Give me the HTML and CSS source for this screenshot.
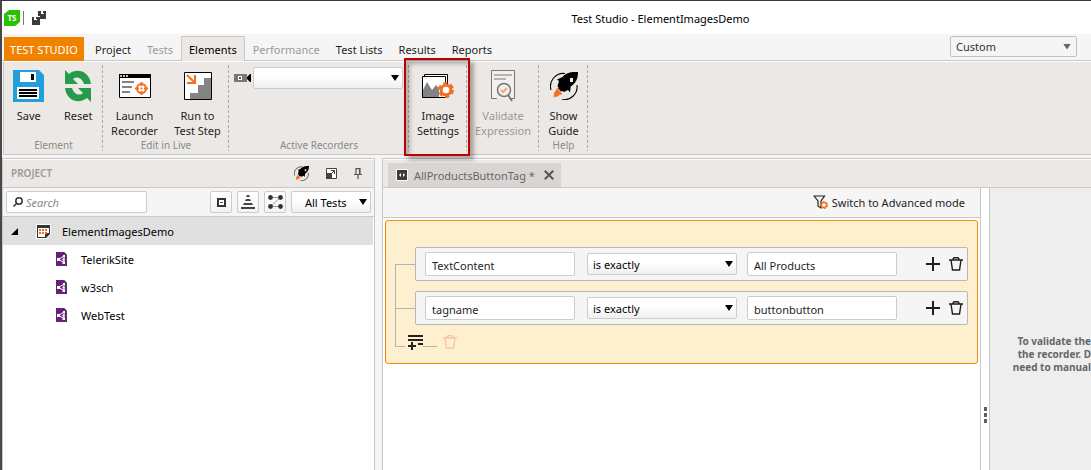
FILE: index.html
```html
<!DOCTYPE html>
<html lang="en">
<head>
<meta charset="utf-8">
<title>Test Studio - ElementImagesDemo</title>
<link rel="stylesheet" href="styles.css">
</head>
<body>
<svg class="defs" aria-hidden="true">
  <symbol id="trash" viewBox="0 0 14 14"><path d="M0 3h14M4 3V2l1-1.2h4L10 2v1M2 3l1.500 10h7L12 3" fill="none" stroke="currentColor" stroke-width="1.400"/></symbol>
  <symbol id="plus" viewBox="0 0 14 14"><path d="M7 0v14M0 7h14" stroke="currentColor" stroke-width="2"/></symbol>
  <symbol id="rocket" viewBox="0 0 28 28">
    <path d="M15 1.500A13 13 0 0 0 1 18M27 13a13 13 0 0 1-15 14.500" fill="none" stroke="#000" stroke-width="1.100"/>
    <path fill="#000" fill-rule="evenodd" d="M28 0c-8-.2-12 1-15.500 5L7 7.500 9 9l-1.500 5 1 1.500-.5 1 3 3 1.500-.5 1.500 1L18 18l2 2.500.7-6C26 11 28 7 28 0zM20 6h3v4h-3z"/>
    <path class="flame" d="M7 16l1 1.500 1 1 3 3-1 1.500-1.500-.5-1.500 2-4.500.5 1-5 1-.8z"/>
  </symbol>
  <symbol id="webtest" viewBox="0 0 11 14">
    <path d="M0 0h8l3 3v11H0z" fill="#68217a"/><path d="M8 0l3 3v11h-1V4H8z" fill="#444"/>
    <path d="M8 4L2.500 7.500 8 10.500z" fill="none" stroke="#fff"/><path d="M7 3h2v2H7zM1 6h3v3H1zM6.500 9.500H9V12H6.500zM6.500 6.500h2v2h-2z" fill="#fff"/>
  </symbol>
</svg>

<div class="app">
  <header class="titlebar">
    <div class="quick">
      <svg width="16" height="16" viewBox="0 0 16 16" role="img" aria-label="TS"><path d="M5 0h11v12l-5 4H0V4z" fill="#27c300"/><text x="8" y="11" text-anchor="middle" class="logo-text">TS</text></svg>
      <span class="quick-line"></span>
      <button class="icon-btn" aria-label="Save all"><svg width="15" height="14" viewBox="0 0 15 14"><path d="M6 0h8v8H8V5H6z" fill="#3c3c3c"/><path d="M0 6h8v8H0z" fill="#3c3c3c"/><path d="M9 0h3v3H9zM2 6h3v3H2z" fill="#fff"/><path d="M11 0h1v2h-1zM4 6h1v2H4z" fill="#3c3c3c"/></svg></button>
    </div>
    <h1 class="title">Test Studio - ElementImagesDemo</h1>
  </header>

  <nav class="tabs">
    <button class="tab brand">TEST STUDIO</button>
    <button class="tab">Project</button>
    <button class="tab" disabled>Tests</button>
    <button class="tab active">Elements</button>
    <button class="tab" disabled>Performance</button>
    <button class="tab">Test Lists</button>
    <button class="tab">Results</button>
    <button class="tab">Reports</button>
    <span class="picker layout-picker"><select aria-label="Layout"><option>Custom</option></select></span>
  </nav>

  <section class="ribbon">
    <div class="group g-element">
      <div class="tools">
        <button class="tool"><svg width="31" height="32" viewBox="0 0 31 32"><path d="M0 0h26l5 5v27H0z" fill="#259fdb"/><path d="M7 2h16v10H7zM4 17h22v12H4z" fill="#fff"/><path d="M18 4h3v6h-3zM6 19h18v2H6zM6 22h18v2H6zM6 25h18v2H6z" fill="#000"/></svg><span>Save</span></button>
        <button class="tool"><svg width="26" height="32" viewBox="0 0 26 32"><g fill="#259b4b"><path d="M0 0l4 4c7-6 20-4 22 10h-7C17 7 11 6 8 9l5 5H0z"/><path d="M26 32l-4-4c-7 6-20 4-22-10h7c2 7 8 8 11 5l-5-5h13z"/></g></svg><span>Reset</span></button>
      </div>
      <h2>Element</h2>
    </div>
    <div class="group g-live">
      <div class="tools">
        <button class="tool"><svg width="32" height="32" viewBox="0 0 32 32"><path d="M.5 4.500h31v23H.5z" fill="#fff" stroke="#000"/><path d="M0 4h32v4H0z"/><path d="M1 5h2v2H1zM4 5h2v2H4zM7 5h2v2H7z" fill="#bbb"/><path d="M3 12h12M3 17h10M3 22h8" stroke="#848484" stroke-width="2"/><circle cx="22.500" cy="18.500" r="4.500" fill="none" stroke="#f36f21" stroke-width="2"/><path d="M22.500 12v4M22.500 21v4M16 18.500h4M25 18.500h4M21.500 18.500h2" stroke="#f36f21" stroke-width="2"/></svg><span>Launch<br>Recorder</span></button>
        <button class="tool"><svg width="28" height="32" viewBox="0 0 28 32"><path d="M.5 2.500h27v27H.5z" fill="#fff" stroke="#000"/><path d="M6 29v-6h8v-8h6V8h7v21z" fill="#848484"/><path d="M3 5l7 7M11 5v8H3" fill="none" stroke="#f36f21" stroke-width="2"/></svg><span>Run to<br>Test Step</span></button>
      </div>
      <h2>Edit in Live</h2>
    </div>
    <div class="group g-recorders">
      <div class="recorder">
        <svg width="17" height="8" viewBox="0 0 17 8"><path d="M0 0h13v8H0z" fill="#777"/><path d="M13 3l3-3h1v8h-1l-3-3z"/><path d="M4 2h4v4H4z" fill="#fff"/><path d="M5 3h2v2H5z" fill="#c22"/></svg>
        <span class="picker"><select aria-label="Active recorder"><option></option></select></span>
      </div>
      <h2>Active Recorders</h2>
    </div>
    <div class="group g-image">
      <div class="tools">
        <button class="tool"><svg width="32" height="32" viewBox="0 0 32 32"><path d="M2.500 4.500h23v20h-23z" fill="#fff" stroke="#000"/><path d="M.5 6.500h23v21H.5z" fill="#fff" stroke="#000"/><path d="M1 20l4-8 5 8 4-5 3 3v9H1z" fill="#848484"/><circle cx="24" cy="20" r="6.500" fill="none" stroke="#f36f21" stroke-width="3" stroke-dasharray="4 2.800"/><circle cx="24" cy="20" r="4.800" fill="#fff" stroke="#f36f21" stroke-width="3"/></svg><span>Image<br>Settings</span></button>
      </div>
    </div>
    <div class="group g-validate">
      <div class="tools">
        <button class="tool" disabled><svg width="24" height="32" viewBox="0 0 24 32"><path d="M6 28.500H.5V.5h23v28H20" fill="#f3f1ef" stroke="#777"/><path d="M3 5h18M3 9h12" stroke="#b4b4b4" stroke-width="2"/><circle cx="13" cy="20" r="6.500" fill="#f3f1ef" stroke="#777" stroke-width="1.500"/><path d="M17 25l4 6" stroke="#777" stroke-width="2"/><path d="M10 20l2 2 4-4" fill="none" stroke="#f4a67c" stroke-width="2"/></svg><span>Validate<br>Expression</span></button>
      </div>
    </div>
    <div class="group g-help">
      <div class="tools">
        <button class="tool"><svg width="28" height="32" viewBox="0 0 28 32"><use href="#rocket" y="2" width="28" height="28"/></svg><span>Show<br>Guide</span></button>
      </div>
      <h2>Help</h2>
    </div>
  </section>

  <main class="workspace">
    <aside class="project">
      <header class="panel-head">
        <h2>PROJECT</h2>
        <button class="icon-btn" aria-label="Guide"><svg width="15" height="15"><use href="#rocket" width="15" height="15"/></svg></button>
        <button class="icon-btn" aria-label="Maximize"><svg width="11" height="11" viewBox="0 0 11 11"><path d="M.5.5h10v10H.5z" fill="#fff" stroke="#444"/><path d="M0 5h6v6H0z" fill="#444"/><path d="M5 2.500h3.500V6M8.500 2.500L5 6" stroke="#444" fill="none"/></svg></button>
        <button class="icon-btn" aria-label="Pin"><svg width="8" height="11" viewBox="0 0 8 11"><path d="M2 6V.7h4V6M0 6.500h8M4 7v4" fill="none" stroke="#555" stroke-width="1.200"/><path d="M5 1h1v5H5z" fill="#555"/></svg></button>
      </header>
      <div class="project-tools">
        <label class="search"><svg width="10" height="10" viewBox="0 0 10 10"><circle cx="6" cy="4" r="3.200" fill="none" stroke="#333" stroke-width="1.500"/><path d="M4 6L.5 9.500" stroke="#333" stroke-width="1.500"/></svg><input type="search" placeholder="Search" aria-label="Search"></label>
        <button class="square" aria-label="Collapse all"><svg width="9" height="9" viewBox="0 0 9 9"><path d="M1 1h7v7H1z" fill="#fff" stroke="#333" stroke-width="2"/><path d="M3 4.500h3" stroke="#1668b0"/></svg></button>
        <button class="square" aria-label="Group"><svg width="14" height="14" viewBox="0 0 14 14"><path d="M6 0h2l1 2H5zM5 4h4l1 2H4zM3 8h8l1 2H2zM0 12h14v2H0z" fill="#444"/></svg></button>
        <button class="square" aria-label="Dependencies"><svg width="15" height="14" viewBox="0 0 15 14"><path d="M3 2.500h9L3 11.500h9" fill="none" stroke="#999"/><g fill="#333"><circle cx="2.500" cy="2.500" r="2.400"/><circle cx="12.500" cy="2.500" r="2.400"/><circle cx="2.500" cy="11.500" r="2.400"/><circle cx="12.500" cy="11.500" r="2.400"/></g></svg></button>
        <span class="picker tests-picker"><select aria-label="Filter tests"><option>All Tests</option></select></span>
      </div>
      <ul class="tree">
        <li class="node root"><svg class="expander" width="7" height="7" viewBox="0 0 7 7"><path d="M7 0v7H0z"/></svg><svg width="15" height="15" viewBox="0 0 15 15"><path d="M0 0h15v10l-5 5H0z" fill="#fff"/><path d="M1 1h13v9l-4 4H1z" fill="#333"/><path d="M2 4h11v5H9v4H2z" fill="#fff"/><path d="M3 5h2v2H3zM6 5h2v2H6zM9 5h2v2H9zM3 8h2v2H3zM6 8h2v2H6zM9 8h2v2H9z" fill="#f36f21"/></svg>ElementImagesDemo</li>
        <li class="node"><svg width="11" height="14"><use href="#webtest"/></svg>TelerikSite</li>
        <li class="node"><svg width="11" height="14"><use href="#webtest"/></svg>w3sch</li>
        <li class="node"><svg width="11" height="14"><use href="#webtest"/></svg>WebTest</li>
      </ul>
    </aside>

    <section class="document">
      <div class="doc-tabs">
        <div class="doc-tab"><svg width="12" height="12" viewBox="0 0 12 12"><path d="M.5.5h11v11H.5z" fill="#3c3c3c" stroke="#fff"/><path d="M5 4v4L3 6zM7 4v4l2-2z" fill="#fff"/></svg><span>AllProductsButtonTag *</span><button class="icon-btn" aria-label="Close"><svg width="10" height="10" viewBox="0 0 10 10"><path d="M.8.8l8.400 8.400M9.200.8L.8 9.200" stroke="#555" stroke-width="2"/></svg></button></div>
      </div>
      <div class="doc-body">
        <div class="editor">
          <div class="mode-bar"><button class="mode"><svg width="15" height="15" viewBox="0 0 15 15"><path d="M.5 1h11L8 6v7L5 11V6L1 1" fill="none" stroke="#222" stroke-width="1.200"/><circle cx="11" cy="10" r="2.600" fill="#fff" stroke="#f36f21" stroke-width="1.500"/><circle cx="11" cy="10" r="3.600" fill="none" stroke="#f36f21" stroke-dasharray="1.900"/></svg>Switch to Advanced mode</button></div>
          <div class="conditions">
            <div class="condition first">
              <span class="branch"></span>
              <div class="fields">
                <input type="text" aria-label="Property" value="TextContent">
                <span class="picker"><select aria-label="Comparison"><option>is exactly</option></select></span>
                <input type="text" aria-label="Value" value="All Products">
                <button class="icon-btn add" aria-label="Add"><svg width="14" height="14"><use href="#plus"/></svg></button>
                <button class="icon-btn" aria-label="Delete"><svg width="14" height="14"><use href="#trash"/></svg></button>
              </div>
            </div>
            <div class="condition">
              <span class="branch"></span>
              <div class="fields">
                <input type="text" aria-label="Property" value="tagname">
                <span class="picker"><select aria-label="Comparison"><option>is exactly</option></select></span>
                <input type="text" aria-label="Value" value="buttonbutton">
                <button class="icon-btn add" aria-label="Add"><svg width="14" height="14"><use href="#plus"/></svg></button>
                <button class="icon-btn" aria-label="Delete"><svg width="14" height="14"><use href="#trash"/></svg></button>
              </div>
            </div>
            <div class="cond-foot">
              <span class="elbow"></span>
              <button class="icon-btn" aria-label="Add group"><svg width="15" height="15" viewBox="0 0 15 15"><path d="M0 1h15M0 5h15M10 9h5M4 7v8M0 11h8" stroke="#222" stroke-width="2"/></svg></button>
              <span class="dash"></span>
              <button class="icon-btn faded" aria-label="Delete group" disabled><svg width="14" height="14"><use href="#trash"/></svg></button>
            </div>
          </div>
        </div>
        <div class="splitter"><i></i><i></i><i></i></div>
        <aside class="hint"><p>To validate the<br>the recorder. D<br>need to manual</p></aside>
      </div>
    </section>
  </main>
  <div class="callout"></div>
</div>
</body>
</html>
```
FILE: styles.css
```css
* { box-sizing: border-box; }
body { margin: 0; font: 11px/15px "Noto Sans", "Open Sans", sans-serif; color: #1e1e1e; background: #fff; }
button, input, select { font: inherit; color: inherit; margin: 0; }
button { background: none; border: 0; padding: 0; }
h1, h2, p, ul { margin: 0; padding: 0; font-size: inherit; font-weight: normal; }
svg { display: block; flex: none; }
.defs { position: absolute; width: 0; height: 0; }
.flame { fill: #f36f21; }
.icon-btn { display: flex; }

.app { position: relative; min-height: 100vh; display: flex; flex-direction: column; background: #f5f5f5; border-left: 2px solid #49474a; border-top: 1px solid #3b393c; overflow: hidden; }

.titlebar { display: flex; align-items: center; height: 33px; background: #fff; }
.quick { display: flex; align-items: center; width: 46px; padding-left: 2px; }
.quick-line { width: 1px; height: 14px; margin: 0 8px 0 3px; background: #777; }
.logo-text { font: bold 8px "Open Sans", sans-serif; fill: #fff; }
.title { flex: 1; padding: 2px 0 0 182px; text-align: center; color: #000; }

.tabs { display: flex; align-items: flex-end; height: 28px; padding: 0 14px 0 2px; border-bottom: 1px solid #fff; box-shadow: inset 0 -1px #c8c8c8; }
.tab { height: 24px; padding: 1px 8px 0; white-space: nowrap; }
.tab:disabled { color: #999; }
.tab.brand { width: 80px; padding: 1px 0 0; margin-right: 3px; background: #f08200; color: #fff; }
.tab.active { background: #ece8e5; border: 1px solid #c8c8c8; border-bottom: 0; height: 25px; padding: 1px 7px 0; color: #000; }

.picker { display: grid; align-items: center; width: 150px; height: 22px; }
.picker select { grid-area: 1 / 1; width: 100%; height: 100%; padding: 0 5px; appearance: none; border: 1px solid #ccc; border-radius: 2px; background: linear-gradient(#fff 40%, #f0f0f0); color: #000; }
.picker::after { content: ""; grid-area: 1 / 1; justify-self: end; width: 8px; height: 6px; margin-right: 4px; background: #000; clip-path: polygon(0 0, 100% 0, 50% 100%); pointer-events: none; }
.layout-picker { width: 127px; height: 21px; margin-left: auto; align-self: flex-start; margin-top: 2px; }
.layout-picker select { background: #f5f5f5; color: #333; border-color: #c0c0c0; }
.layout-picker::after { background: #666; margin-right: 6px; }

.ribbon { display: flex; height: 93px; margin-left: 1px; background: #ece8e5; border: 1px solid #c8c8c8; border-width: 0 0 1px 1px; }
.group { display: flex; flex-direction: column; padding-top: 5px; background: repeating-linear-gradient(#aaa 0 3px, transparent 3px 5px) right 3px / 1px 86px no-repeat; }
.group h2 { margin-top: auto; text-align: center; font-size: 10px; padding-bottom: 1px; color: #8a8a8a; }
.g-element { width: 99px; }
.g-live { width: 126px; }
.g-recorders { width: 180px; }
.g-image { width: 58px; }
.g-validate { width: 72px; }
.g-help { width: 49px; }
.tools { display: flex; justify-content: center; }
.tool { flex: 1 1 0; display: flex; flex-direction: column; align-items: center; gap: 6px; padding-top: 3px; white-space: nowrap; min-width: 0; }
.tool:disabled { color: #999; }
.recorder { display: flex; padding-left: 5px; gap: 2px; }
.recorder > svg { margin-top: 7px; }

.workspace { flex: 1; display: flex; gap: 7px; margin-top: 3px; }
.project { width: 373px; display: flex; flex-direction: column; border: 1px solid #c8c8c8; border-bottom: 0; background: #fff; }
.panel-head { display: flex; align-items: center; gap: 17px; height: 29px; padding: 0 12px 0 8px; background: #ece8e5; border-top: 1px solid #fff; border-bottom: 1px solid #c8c8c8; }
.panel-head h2 { margin-right: auto; font-size: 10px; font-weight: 600; color: #999; }
.panel-head .flame { fill: #000; }
.project-tools { display: flex; align-items: center; gap: 5px; height: 29px; padding: 0 3px; background: #f5f5f5; border-bottom: 1px solid #c8c8c8; }
.search { display: flex; align-items: center; gap: 3px; width: 141px; height: 22px; margin-right: auto; padding: 0 6px; border: 1px solid #ccc; border-radius: 2px; background: #fff; }
.search input { width: 100%; min-width: 0; border: 0; padding: 0; background: none; outline: 0; appearance: none; }
.search input::placeholder { color: #888; font-style: italic; }
.square { display: grid; place-items: center; width: 22px; height: 22px; border: 1px solid #ccc; border-radius: 2px; background: linear-gradient(#fff, #f2f2f2); }
.tests-picker { width: 80px; }
.tests-picker select { padding-left: 13px; }
.tree { list-style: none; }
.node { display: flex; align-items: center; gap: 14px; height: 28px; padding-left: 53px; color: #000; }
.node.root { gap: 11px; padding-left: 8px; margin-right: 1px; background: #e0e0e0; }
.expander { margin-right: 7px; }

.document { flex: 1; min-width: 0; display: flex; flex-direction: column; border: 1px solid #c8c8c8; border-width: 1px 0 0 1px; }
.doc-tabs { display: flex; align-items: flex-end; height: 29px; padding-left: 5px; background: #ece8e5; border-top: 1px solid #fff; border-bottom: 1px solid #c8c8c8; }
.doc-tab { display: flex; align-items: center; height: 24px; width: 173px; padding: 0 7px 0 8px; gap: 6px; background: #d9d5d3; color: #666; white-space: nowrap; }
.doc-tab button { margin-left: auto; }
.doc-body { flex: 1; display: flex; min-height: 0; }
.editor { flex: 1; min-width: 0; background: #fff; border-right: 1px solid #c8c8c8; }
.mode-bar { display: flex; justify-content: flex-end; height: 30px; padding-right: 15px; background: #f5f5f5; border-bottom: 1px solid #c8c8c8; }
.mode { display: flex; align-items: center; gap: 4px; }
.conditions { margin: 2px; padding: 21px 9px 11px; border: 1px solid #f08c0c; border-radius: 3px; background: #fef0cf; }
.condition { display: flex; height: 44px; }
.branch { flex: 0 0 20px; border-left: 1px solid #b4b4b4; background: linear-gradient(#b4b4b4, #b4b4b4) 0 50% / 100% 1px no-repeat; }
.first .branch { height: 22px; margin-top: 22px; background-position: 0 0; }
.fields { flex: 1; display: flex; align-items: center; height: 34px; margin: 5px 0; padding: 0 4px 0 9px; border: 1px solid #b8b8b8; border-radius: 2px; background: #f5f5f5; }
.fields input { width: 150px; height: 24px; padding: 2px 6px 0; border: 1px solid #ccc; border-radius: 2px; background: #fff; }
.fields .picker { margin: 0 10px 0 12px; }
.fields .add { margin: 0 9px 0 auto; }
.cond-foot { display: flex; align-items: flex-start; height: 22px; }
.elbow { width: 10px; height: 17px; margin-right: 3px; border: 1px solid #b4b4b4; border-width: 0 0 1px 1px; }
.cond-foot .icon-btn { padding-top: 5px; }
.dash { width: 14px; height: 17px; border-bottom: 1px solid #b4b4b4; }
.cond-foot .faded { margin-left: 6px; color: #fac3a5; }
.splitter { width: 8px; display: flex; flex-direction: column; align-items: center; justify-content: flex-end; gap: 2px; padding-bottom: 47px; background: #fff; }
.splitter i { width: 3px; height: 4px; background: #56606b; }
.hint { width: 102px; display: grid; align-items: center; border-left: 1px solid #c8c8c8; background: #eee; color: #666; font-size: 10px; line-height: 13px; text-align: right; white-space: nowrap; }
.hint p { padding-top: 50px; font-weight: bold; }

.callout { position: absolute; left: 402px; top: 57px; width: 66px; height: 98px; border: 2px solid #c00000; box-shadow: 4px 4px 4px rgba(0,0,0,.3), inset 4px 4px 4px rgba(0,0,0,.25); pointer-events: none; }
```
